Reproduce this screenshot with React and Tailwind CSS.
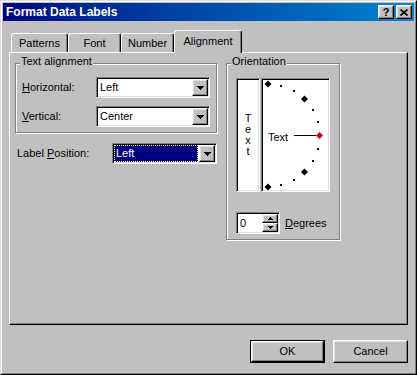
import React from "react";

// Win98 bevels
const raised =
  "border border-t-white border-l-white border-r-black border-b-black shadow-[inset_-1px_-1px_0_#808080,inset_1px_1px_0_#dfdfdf]";
const sunken =
  "border border-t-[#808080] border-l-[#808080] border-r-white border-b-white shadow-[inset_1px_1px_0_#000,inset_-1px_-1px_0_#dfdfdf]";
const etched =
  "border border-[#808080] shadow-[inset_1px_1px_0_#fff,1px_1px_0_#fff]";

function DownArrow() {
  return (
    <svg width="7" height="4" viewBox="0 0 7 4" shapeRendering="crispEdges">
      <path d="M0 0h7v1H0z M1 1h5v1H1z M2 2h3v1H2z M3 3h1v1H3z" fill="#000" />
    </svg>
  );
}

function SpinArrow({ up }) {
  return (
    <svg width="5" height="3" viewBox="0 0 5 3" shapeRendering="crispEdges">
      <path
        d={up ? "M2 0h1v1H2z M1 1h3v1H1z M0 2h5v1H0z" : "M0 0h5v1H0z M1 1h3v1H1z M2 2h1v1H2z"}
        fill="#000"
      />
    </svg>
  );
}

function Combo({ value, className, selected }) {
  return (
    <div className={`${sunken} ${className} h-[21px] bg-white p-px flex`}>
      <div className="flex-1 flex items-center">
        {selected ? (
          <span className="h-full flex-1 mr-px pl-px flex items-center bg-[#000080] text-white border border-dotted border-[#ffffa0]">
            {value}
          </span>
        ) : (
          <span className="pl-[2px]">{value}</span>
        )}
      </div>
      <div className={`${raised} w-[16px] h-full bg-[#c0c0c0] flex items-center justify-center`}>
        <DownArrow />
      </div>
    </div>
  );
}

function Tab({ label, className, active }) {
  if (active) {
    return (
      <div
        className={`${className} relative z-10 h-[23px] mb-[-1px] bg-[#c0c0c0] border-t border-l border-r border-t-white border-l-white border-r-black shadow-[inset_-1px_0_0_#808080] rounded-t-[3px] flex items-center justify-center pb-[2px]`}
      >
        {label}
      </div>
    );
  }
  return (
    <div
      className={`${className} h-[19px] border-t border-l border-r border-t-white border-l-white border-r-black shadow-[inset_-1px_0_0_#808080] rounded-t-[3px] flex items-center justify-center`}
    >
      {label}
    </div>
  );
}

function GroupBox({ title, className, children }) {
  return (
    <div className={`${etched} ${className} relative`}>
      <span className="absolute -top-[9px] left-[4px] px-px bg-[#c0c0c0] leading-[13px]">
        {title}
      </span>
      {children}
    </div>
  );
}

function Dial() {
  const cx = 6;
  const cy = 56.5;
  const r = 51.5;
  const marks = [];
  for (let a = 90; a >= -90; a -= 15) {
    const rad = (a * Math.PI) / 180;
    const x = cx + r * Math.cos(rad);
    const y = cy - r * Math.sin(rad);
    if (a % 45 === 0) {
      marks.push(
        <polygon
          key={a}
          points={`${x},${y - 3.5} ${x + 3.5},${y} ${x},${y + 3.5} ${x - 3.5},${y}`}
          fill={a === 0 ? "#d00010" : "#000"}
        />
      );
    } else {
      marks.push(<rect key={a} x={Math.round(x) - 1} y={Math.round(y) - 1} width="2" height="2" fill="#000" />);
    }
  }
  return (
    <svg width="67" height="112" viewBox="0 0 67 112">
      <text x="6" y="62" fontFamily="'Liberation Sans', Arial, sans-serif" fontSize="11" fill="#000">
        Text
      </text>
      <line x1="32" y1="56.5" x2="54" y2="56.5" stroke="#000" strokeWidth="1" />
      {marks}
    </svg>
  );
}

export default function App() {
  return (
    <div className="w-[417px] h-[375px] bg-[#c0c0c0] text-[11px] text-black font-['Liberation_Sans',Arial,sans-serif] border border-t-[#dfdfdf] border-l-[#dfdfdf] border-r-black border-b-black">
      <div className="h-full border border-t-white border-l-white border-r-[#808080] border-b-[#808080] p-px flex flex-col">
        {/* title bar */}
        <div className="h-[18px] bg-gradient-to-r from-[#000080] to-[#1084d0] flex items-center pl-[3px] pr-[2px]">
          <span className="flex-1 text-white font-bold text-[12px] leading-none">Format Data Labels</span>
          <div className="flex gap-[2px]">
            <div className={`${raised} w-[16px] h-[14px] bg-[#c0c0c0] flex items-center justify-center font-bold text-[11px] leading-none`}>
              ?
            </div>
            <div className={`${raised} w-[16px] h-[14px] bg-[#c0c0c0] flex items-center justify-center`}>
              <svg width="8" height="7" viewBox="0 0 8 7">
                <path d="M0.5 0.5L7.5 6.5M7.5 0.5L0.5 6.5" stroke="#000" strokeWidth="1.6" />
              </svg>
            </div>
          </div>
        </div>

        <div className="flex flex-col px-[6px]">
          {/* tabs */}
          <div className="flex items-end pl-[2px] mt-[9px]">
            <Tab label="Patterns" className="w-[57px]" />
            <Tab label="Font" className="w-[53px]" />
            <Tab label="Number" className="w-[53px]" />
            <Tab label="Alignment" className="w-[68px]" active />
          </div>

          {/* tab panel */}
          <div className="h-[273px] border border-t-white border-l-white border-r-black border-b-black shadow-[inset_-1px_-1px_0_#808080] flex pt-[10px] pl-[5px]">
            <div className="w-[202px] flex flex-col">
              <GroupBox title="Text alignment" className="h-[70px] pt-[13px] px-[6px] flex flex-col gap-[8px]">
                <div className="flex items-center justify-between">
                  <span>
                    <span className="underline">H</span>orizontal:
                  </span>
                  <Combo value="Left" className="w-[114px]" />
                </div>
                <div className="flex items-center justify-between">
                  <span>
                    <span className="underline">V</span>ertical:
                  </span>
                  <Combo value="Center" className="w-[114px]" />
                </div>
              </GroupBox>
              <div className="mt-[10px] pl-[2px] flex items-center justify-between">
                <span>
                  Label <span className="underline">P</span>osition:
                </span>
                <Combo value="Left" className="w-[105px]" selected />
              </div>
            </div>

            <GroupBox title="Orientation" className="ml-[9px] w-[114px] h-[177px] pl-[9px] pt-[14px]">
              <div className="flex gap-px">
                <div className={`${sunken} w-[24px] h-[114px] bg-white flex flex-col items-center justify-center leading-[11px]`}>
                  <span>T</span>
                  <span>e</span>
                  <span>x</span>
                  <span>t</span>
                </div>
                <div className={`${sunken} w-[69px] h-[114px] bg-white`}>
                  <Dial />
                </div>
              </div>
              <div className="mt-[20px] flex items-center gap-[5px]">
                <div className={`${sunken} w-[44px] h-[22px] bg-white p-px flex`}>
                  <span className="flex-1 flex items-center pl-[2px]">0</span>
                  <div className="w-[16px] flex flex-col">
                    <div className={`${raised} flex-1 bg-[#c0c0c0] flex items-center justify-center`}>
                      <SpinArrow up />
                    </div>
                    <div className={`${raised} flex-1 bg-[#c0c0c0] flex items-center justify-center`}>
                      <SpinArrow />
                    </div>
                  </div>
                </div>
                <span>
                  <span className="underline">D</span>egrees
                </span>
              </div>
            </GroupBox>
          </div>

          {/* buttons */}
          <div className="mt-[15px] flex justify-end gap-[8px]">
            <div className="w-[75px] h-[23px] border border-black flex">
              <div className={`${raised} flex-1 flex items-center justify-center`}>OK</div>
            </div>
            <div className={`${raised} w-[75px] h-[23px] flex items-center justify-center`}>Cancel</div>
          </div>
        </div>
      </div>
    </div>
  );
}
